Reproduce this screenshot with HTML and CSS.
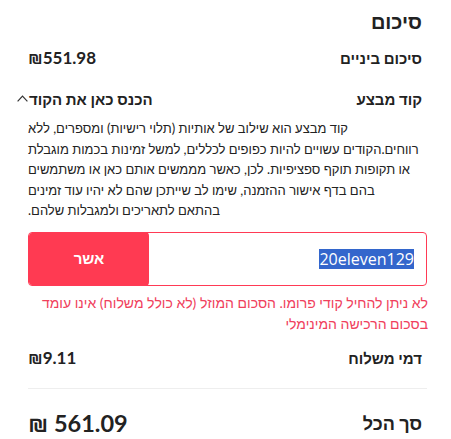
FILE: index.html
```html
<!DOCTYPE html>
<html lang="he" dir="rtl">
<head>
<meta charset="utf-8">
<title>סיכום</title>
<link rel="stylesheet" href="styles.css">
</head>
<body>
<section class="summary">
  <h2 class="title">סיכום</h2>
  <div class="row sub-row">
    <span class="label">סיכום ביניים</span>
    <span class="amount" dir="ltr">₪551.98</span>
  </div>
  <div class="row promo-row">
    <span class="label">קוד מבצע</span>
    <button class="toggle" type="button">הכנס כאן את הקוד<svg class="chev" width="11" height="7" viewBox="0 0 11 7" aria-hidden="true"><path d="M0.6 6.4 L5.5 1.2 L10.4 6.4" fill="none" stroke="#333" stroke-width="1.2"/></svg></button>
  </div>
  <p class="info">קוד מבצע הוא שילוב של אותיות (תלוי רישיות) ומספרים, ללא רווחים.הקודים עשויים להיות כפופים לכללים, למשל זמינות בכמות מוגבלת או תקופות תוקף ספציפיות. לכן, כאשר מממשים אותם כאן או משתמשים בהם בדף אישור ההזמנה, שימו לב שייתכן שהם לא יהיו עוד זמינים<br>בהתאם לתאריכים ולמגבלות שלהם.</p>
  <div class="code-box">
    <div class="code-field" dir="ltr"><span class="sel">20eleven129</span></div>
    <button class="apply" type="button">אשר</button>
  </div>
  <p class="error">לא ניתן להחיל קודי פרומו. הסכום המוזל (לא כולל משלוח) אינו עומד בסכום הרכישה המינימלי</p>
  <div class="row ship-row">
    <span class="label">דמי משלוח</span>
    <span class="amount" dir="ltr">₪9.11</span>
  </div>
  <hr class="divider">
  <div class="row total-row">
    <span class="total-label">סך הכל</span>
    <span class="total" dir="ltr">₪ 561.09</span>
  </div>
</section>
</body>
</html>
```

FILE: styles.css
```css
* { box-sizing: border-box; }
html, body { margin: 0; background: #fff; }
body {
  font-family: Lato, "Liberation Sans", sans-serif;
  color: #222;
}
.summary {
  padding: 9px 24px 0 28px;
  display: flex;
  flex-direction: column;
}
.title {
  margin: 0;
  padding-right: 5px;
  font-size: 20px;
  line-height: 24px;
  font-weight: 700;
}
.row {
  display: flex;
  justify-content: space-between;
  align-items: center;
  padding-right: 5px;
}
.label {
  font-size: 15px;
  font-weight: 700;
  line-height: 20px;
}
.amount {
  font-size: 17px;
  font-weight: 700;
  line-height: 20px;
}
.sub-row { margin-top: 15px; }
.promo-row { margin-top: 21px; }
.toggle {
  border: 0;
  background: none;
  padding: 0;
  font: inherit;
  font-size: 15px;
  font-weight: 700;
  line-height: 20px;
  color: #222;
  display: flex;
  align-items: center;
  gap: 1px;
  margin-left: -11px;
}
.chev { display: block; margin-top: -2px; }
.info {
  margin: 9px 0 0;
  padding-right: 5px;
  font-size: 13px;
  line-height: 20.5px;
  text-align: left;
  color: #222;
}
.code-box {
  margin-top: 11px;
  height: 54px;
  border: 1px solid #ff3a55;
  border-radius: 4px;
  display: flex;
  overflow: hidden;
}
.apply {
  width: 120px;
  border: 0;
  border-radius: 4px;
  background: #ff3a52;
  color: #fff;
  font-family: "Liberation Sans", sans-serif;
  font-size: 15px;
  font-weight: 700;
  margin: -1px -1px -1px 0;
}
.code-field {
  flex: 1;
  display: flex;
  align-items: center;
  justify-content: flex-end;
  padding-right: 12px;
  font-family: "Open Sans", sans-serif;
  font-size: 16px;
}
.sel {
  background: #3366cc;
  color: #fff;
  line-height: 20px;
}
.error {
  margin: 6px -1px 0 0;
  font-size: 14px;
  line-height: 21px;
  color: #f0405c;
}
.ship-row { margin-top: 14px; }
.divider {
  margin: 20px 0 0;
  border: 0;
  border-top: 1px solid #eeeeee;
}
.total-row { margin-top: 21px; }
.total-label {
  font-size: 18px;
  font-weight: 700;
  line-height: 24px;
}
.total {
  font-size: 23.5px;
  font-weight: 700;
  line-height: 26px;
}
```
